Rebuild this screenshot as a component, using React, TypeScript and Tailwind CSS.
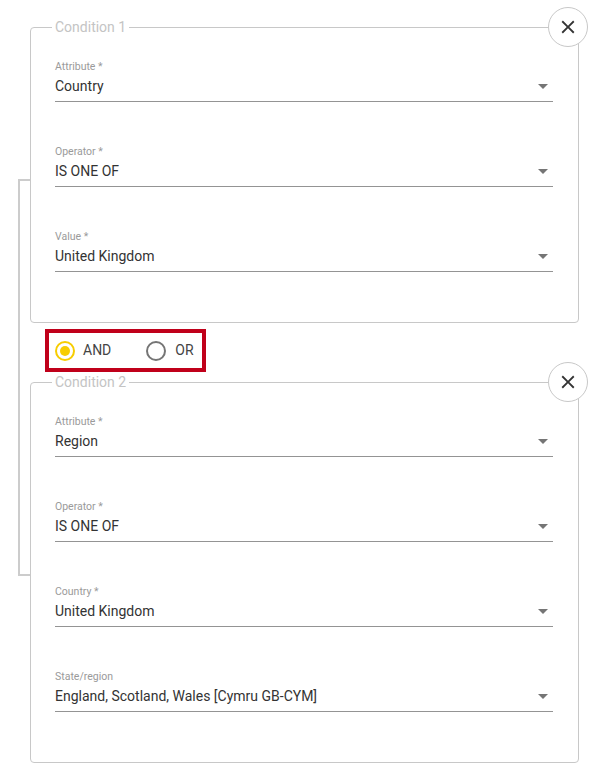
import { useState } from 'react'

interface Field {
  label: string
  value: string
}

interface Condition {
  id: string
  title: string
  fields: Field[]
}

const conditions: Condition[] = [
  {
    id: 'c1',
    title: 'Condition 1',
    fields: [
      { label: 'Attribute *', value: 'Country' },
      { label: 'Operator *', value: 'IS ONE OF' },
      { label: 'Value *', value: 'United Kingdom' },
    ],
  },
  {
    id: 'c2',
    title: 'Condition 2',
    fields: [
      { label: 'Attribute *', value: 'Region' },
      { label: 'Operator *', value: 'IS ONE OF' },
      { label: 'Country *', value: 'United Kingdom' },
      { label: 'State/region', value: 'England, Scotland, Wales [Cymru GB-CYM]' },
    ],
  },
]

function CloseIcon() {
  return (
    <svg width="22" height="22" viewBox="0 0 24 24" fill="#333333">
      <path d="M19 6.41L17.59 5 12 10.59 6.41 5 5 6.41 10.59 12 5 17.59 6.41 19 12 13.41 17.59 19 19 17.59 13.41 12z" />
    </svg>
  )
}

function RadioIcon({ checked }: { checked: boolean }) {
  const color = checked ? '#f7cd00' : '#757575'
  return (
    <svg width="20" height="20" viewBox="0 0 20 20">
      <circle cx="10" cy="10" r="9" fill="none" stroke={color} strokeWidth="2" />
      {checked && <circle cx="10" cy="10" r="5" fill={color} />}
    </svg>
  )
}

function SelectField({ field }: { field: Field }) {
  return (
    <div>
      <div className="text-[10.5px] leading-[13px] text-[#9a9a9a]">{field.label}</div>
      <div className="mt-[3px] flex items-center justify-between border-b border-[#949494] pb-[5px]">
        <span className="text-[14px] leading-[20px] text-[#333333]">{field.value}</span>
        <svg width="10" height="5" viewBox="0 0 10 5" className="mr-[5px]">
          <path d="M0 0l5 5 5-5z" fill="#757575" />
        </svg>
      </div>
    </div>
  )
}

function ConditionBox({ condition }: { condition: Condition }) {
  return (
    <div className="relative">
      <fieldset className="rounded-[4px] border border-[#c8c8c8]">
        <legend className="ml-[21px] px-[3px] text-[14px] leading-[20px] text-[#c4c4c4]">
          {condition.title}
        </legend>
        <div className="flex flex-col gap-[43px] pt-[23px] pb-[50px] pl-[24px] pr-[25px]">
          {condition.fields.map((field) => (
            <SelectField key={field.label} field={field} />
          ))}
        </div>
      </fieldset>
      <button
        className="absolute top-[-10px] right-[-9px] flex h-[40px] w-[40px] items-center justify-center rounded-full border border-[#c8c8c8] bg-white"
        title="Remove condition"
      >
        <CloseIcon />
      </button>
    </div>
  )
}

export default function App() {
  const [join, setJoin] = useState<'AND' | 'OR'>('AND')

  return (
    <div className="flex w-[606px] bg-white pt-[17px] pl-[18px] font-['Roboto','Liberation_Sans',sans-serif]">
      {/* bracket linking the conditions */}
      <div className="w-[12px] shrink-0">
        <div className="mt-[162px] h-[397px] border-y-2 border-l-2 border-[#cccccc]" />
      </div>

      <div className="w-[549px] shrink-0">
        <ConditionBox condition={conditions[0]} />

        <div className="mt-[6px] ml-[15px] flex h-[43px] w-[161px] items-center border-[4px] border-[#c0001a] pl-[6px]">
          <label className="mr-[35px] flex cursor-pointer items-center gap-[8px]" onClick={() => setJoin('AND')}>
            <RadioIcon checked={join === 'AND'} />
            <span className="text-[14px] text-[#444444]">AND</span>
          </label>
          <label className="flex cursor-pointer items-center gap-[9px]" onClick={() => setJoin('OR')}>
            <RadioIcon checked={join === 'OR'} />
            <span className="text-[14px] text-[#444444]">OR</span>
          </label>
        </div>

        <ConditionBox condition={conditions[1]} />
      </div>
    </div>
  )
}
